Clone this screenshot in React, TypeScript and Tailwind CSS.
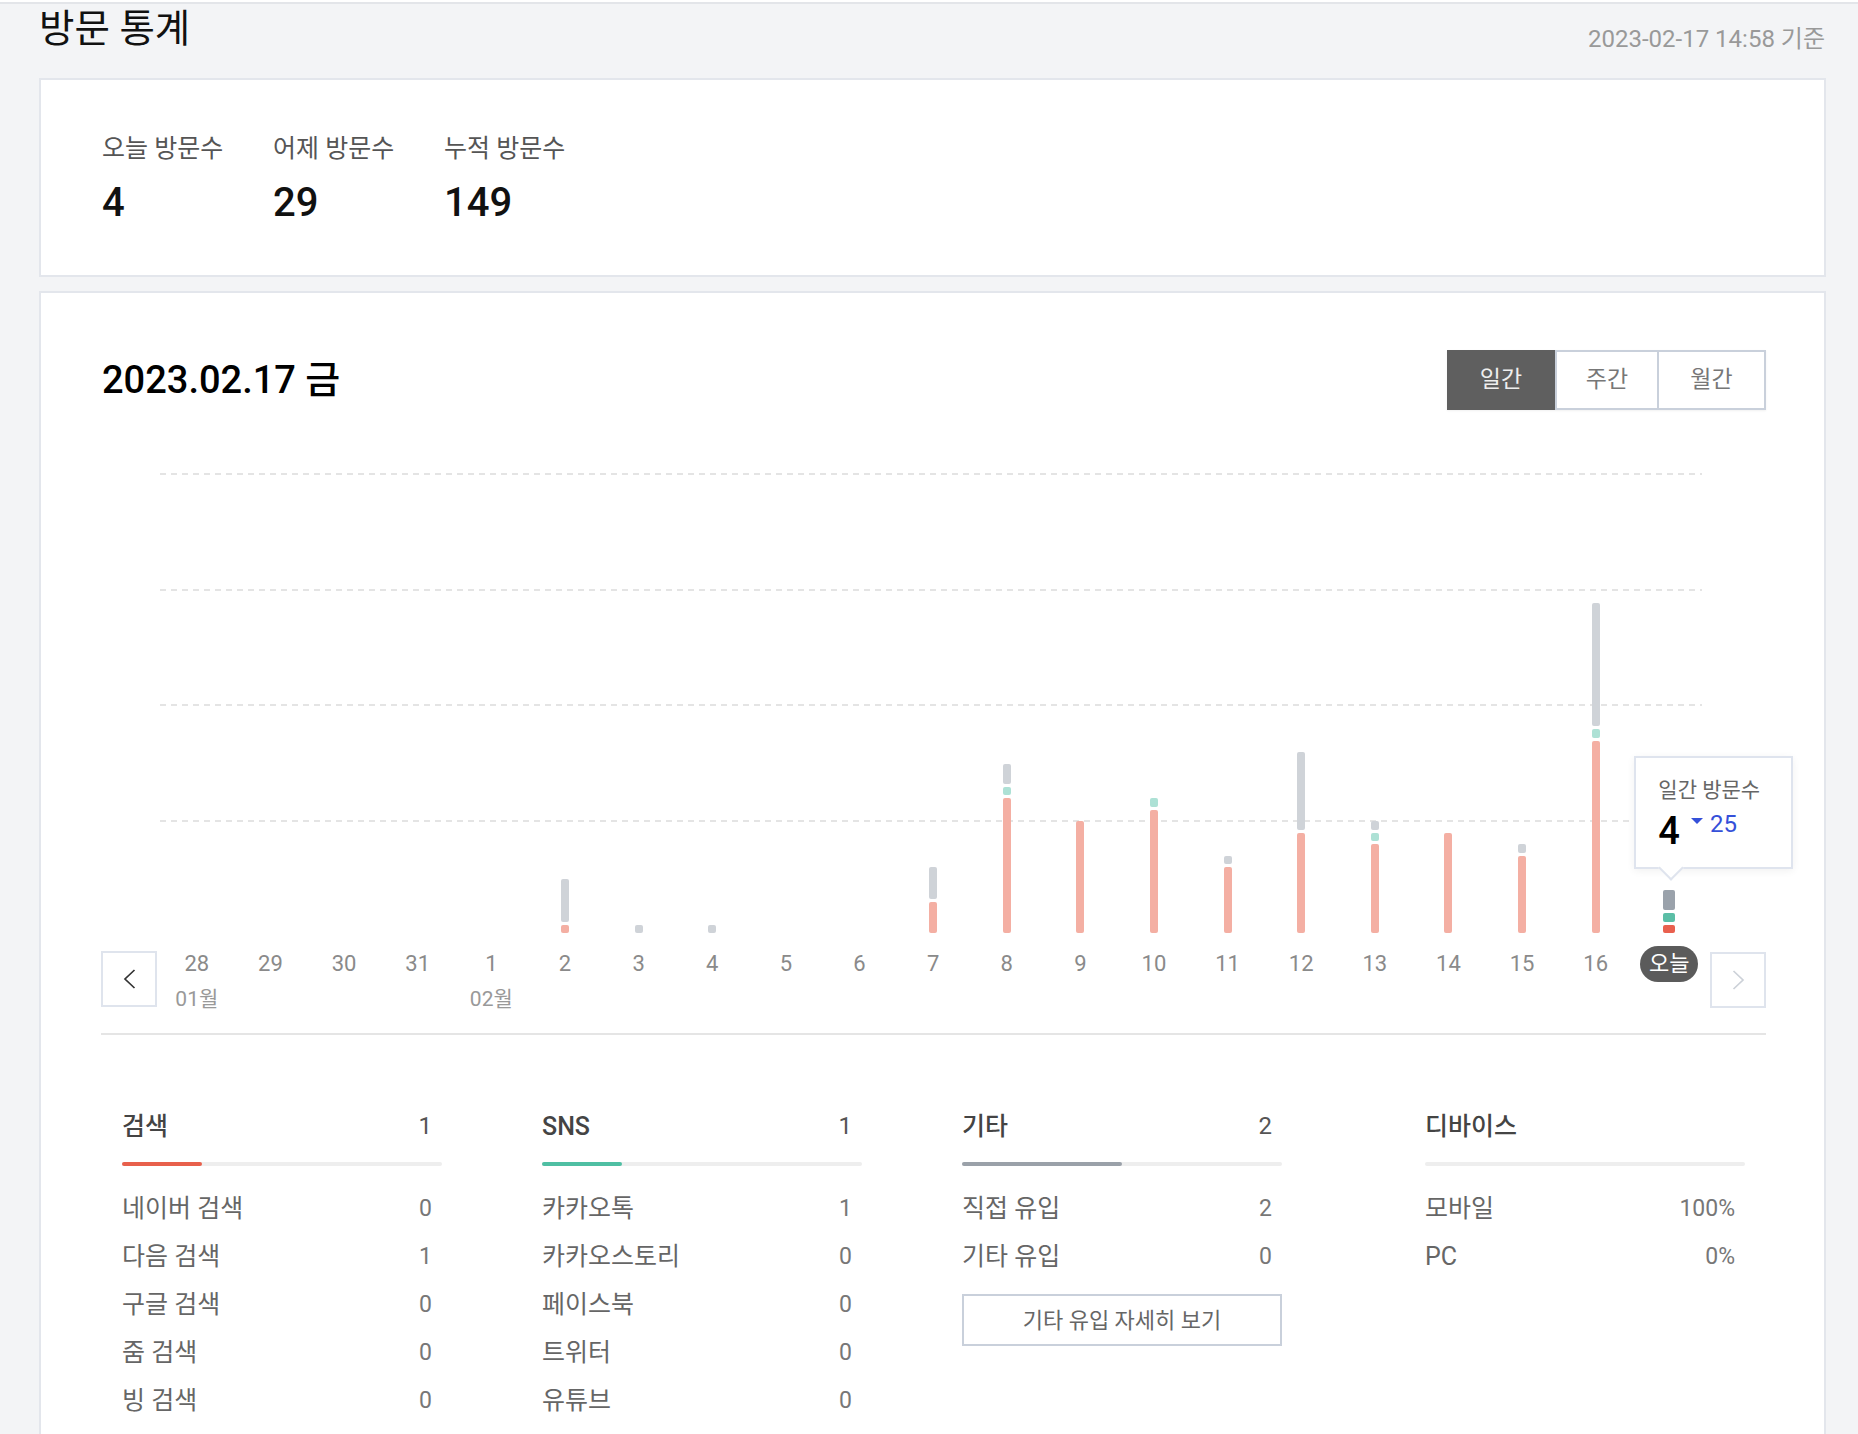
import React from 'react';

const UNIT = 11.5;

type Day = {
    label: string;
    month?: string;
    red: number;
    teal: number;
    gray: number;
    today?: boolean;
};

const DAYS: Day[] = [
    { label: '28', month: '01월', red: 0, teal: 0, gray: 0 },
    { label: '29', red: 0, teal: 0, gray: 0 },
    { label: '30', red: 0, teal: 0, gray: 0 },
    { label: '31', red: 0, teal: 0, gray: 0 },
    { label: '1', month: '02월', red: 0, teal: 0, gray: 0 },
    { label: '2', red: 1, teal: 0, gray: 4 },
    { label: '3', red: 0, teal: 0, gray: 1 },
    { label: '4', red: 0, teal: 0, gray: 1 },
    { label: '5', red: 0, teal: 0, gray: 0 },
    { label: '6', red: 0, teal: 0, gray: 0 },
    { label: '7', red: 3, teal: 0, gray: 3 },
    { label: '8', red: 12, teal: 1, gray: 2 },
    { label: '9', red: 10, teal: 0, gray: 0 },
    { label: '10', red: 11, teal: 1, gray: 0 },
    { label: '11', red: 6, teal: 0, gray: 1 },
    { label: '12', red: 9, teal: 0, gray: 7 },
    { label: '13', red: 8, teal: 1, gray: 1 },
    { label: '14', red: 9, teal: 0, gray: 0 },
    { label: '15', red: 7, teal: 0, gray: 1 },
    { label: '16', red: 17, teal: 1, gray: 11 },
    { label: '오늘', red: 1, teal: 1, gray: 2, today: true },
];

const GRID_TOPS = ['top-[33px]', 'top-[149px]', 'top-[264px]', 'top-[380px]'];

function Bar({ day }: { day: Day }) {
    const segs = [
        { v: day.gray, cls: day.today ? 'bg-[#9aa2ab]' : 'bg-[#cfd3d8]' },
        { v: day.teal, cls: day.today ? 'bg-[#5bbea6]' : 'bg-[#ade1d5]' },
        { v: day.red, cls: day.today ? 'bg-[#e9604e]' : 'bg-[#f4afa3]' },
    ].filter(s => s.v > 0);

    return (
        <div className="flex flex-col items-center gap-[3px]">
            {segs.map((s, i) => (
                <div
                    key={i}
                    className={`${day.today ? 'w-[12px]' : 'w-[8px]'} rounded-[2px] ${s.cls}`}
                    style={{ height: s.v * UNIT - 3 }}
                />
            ))}
        </div>
    );
}

function Tooltip() {
    return (
        <div className="absolute top-[316px] left-[calc(50%-35px)] z-10 w-[159px] h-[113px] bg-white border-2 border-[#dfe4ee] shadow-[0_2px_8px_rgba(0,0,0,0.06)] pl-[22px] pt-[22px]">
            <div className="text-[21px] leading-none text-[#666]">일간 방문수</div>
            <div className="flex items-start mt-[11px]">
                <span className="text-[38px] leading-none font-medium text-black">4</span>
                <span className="mt-[6px] ml-[11px] w-0 h-0 border-x-[6px] border-x-transparent border-t-[6px] border-t-[#3550d9]" />
                <span className="ml-[7px] text-[24px] leading-none text-[#3550d9]">25</span>
            </div>
            <div className="absolute left-[26px] -bottom-[10px] w-[18px] h-[18px] rotate-45 bg-white border-r-2 border-b-2 border-[#dfe4ee]" />
        </div>
    );
}

function Chevron({ dir, color }: { dir: 'left' | 'right'; color: string }) {
    return (
        <svg width="13" height="20" viewBox="0 0 13 20" fill="none">
            <polyline
                points={dir === 'left' ? '11.5,1 2,10 11.5,19' : '1.5,1 11,10 1.5,19'}
                stroke={color}
                strokeWidth="1.7"
            />
        </svg>
    );
}

type Row = { name: string; value: string };

function StatColumn({
    title,
    total,
    fill,
    rows,
    className = '',
    children,
}: {
    title: string;
    total?: string;
    fill?: string;
    rows: Row[];
    className?: string;
    children?: React.ReactNode;
}) {
    return (
        <div className={`w-[320px] ${className}`}>
            <div className="flex justify-between items-center pr-[10px] h-[24px] font-medium text-[#444]">
                <span className="text-[25px] leading-none">{title}</span>
                {total && <span className="text-[24px] leading-none font-normal text-[#555]">{total}</span>}
            </div>
            <div className="mt-[24px] h-1 w-full rounded-full bg-[#eeeeee]">
                {fill && <div className={`h-1 rounded-full ${fill}`} />}
            </div>
            <div className="mt-[19px]">
                {rows.map(r => (
                    <div key={r.name} className="flex justify-between pr-[10px] h-[48px] items-center text-[#666]">
                        <span className="text-[25px]">{r.name}</span>
                        <span className="text-[23px] text-[#777]">{r.value}</span>
                    </div>
                ))}
            </div>
            {children}
        </div>
    );
}

export default function App() {
    return (
        <div className="min-h-screen bg-[#f3f4f6] font-['Roboto','Noto_Sans_CJK_KR',sans-serif] pb-[40px]">
            <div className="h-[2px] mt-[2px] bg-[#e3e5e9]" />

            {/* Header */}
            <div className="flex justify-between items-start h-[74px] pl-[39px] pr-[33px]">
                <h1 className="mt-[6px] text-[38.5px] leading-none text-[#111]">방문 통계</h1>
                <span className="mt-[23px] text-[24px] leading-none text-[#999]">2023-02-17 14:58 기준</span>
            </div>

            {/* Summary card */}
            <div className="ml-[39px] mr-[32px] h-[199px] bg-white border-2 border-[#e3e6ec] pl-[61px] pt-[56px] flex">
                {[
                    { label: '오늘 방문수', value: '4' },
                    { label: '어제 방문수', value: '29' },
                    { label: '누적 방문수', value: '149' },
                ].map(s => (
                    <div key={s.label} className="w-[171px]">
                        <div className="text-[25px] leading-none text-[#555]">{s.label}</div>
                        <div className="mt-[22px] text-[40px] leading-none font-medium text-[#111]">{s.value}</div>
                    </div>
                ))}
            </div>

            {/* Chart card */}
            <div className="mt-[14px] ml-[39px] mr-[32px] bg-white border-2 border-[#e3e6ec] pl-[60px] pr-[58px] pt-[57px] pb-[80px]">
                <div className="flex items-center justify-between h-[60px]">
                    <h2 className="ml-[1px] text-[38px] leading-none font-medium text-black">2023.02.17 금</h2>
                    <div className="flex h-[60px] shadow-[0_1px_2px_rgba(0,0,0,0.06)]">
                        <button className="w-[108px] h-[60px] bg-[#5f5f5f] text-[23px] text-[#eeeeee]">일간</button>
                        <button className="w-[104px] h-[60px] border-2 border-[#c9d0db] text-[23px] text-[#777]">주간</button>
                        <button className="w-[107px] h-[60px] border-y-2 border-r-2 border-[#c9d0db] text-[23px] text-[#777]">월간</button>
                    </div>
                </div>

                {/* Chart */}
                <div className="relative mt-[30px]">
                    {GRID_TOPS.map(t => (
                        <div
                            key={t}
                            className={`absolute ${t} left-[59px] right-[64px] h-[2px] bg-[repeating-linear-gradient(to_right,#e4e4e4_0_6px,transparent_6px_11px)]`}
                        />
                    ))}
                    <div className="relative flex">
                        <div className="w-[59px] pt-[511px]">
                            <button className="w-[56px] h-[56px] border-2 border-[#dfe4ed] flex items-center justify-center">
                                <Chevron dir="left" color="#333" />
                            </button>
                        </div>
                        {DAYS.map(day => (
                            <div key={day.label} className="relative flex-1 flex flex-col items-center">
                                <div className="h-[493px] flex flex-col justify-end">
                                    <Bar day={day} />
                                </div>
                                {day.today && <Tooltip />}
                                <div className="mt-[13px] h-9 flex items-center">
                                    {day.today ? (
                                        <span className="w-[58px] h-9 rounded-full bg-[#5b5b5b] text-white text-[22px] leading-none flex items-center justify-center">
                                            {day.label}
                                        </span>
                                    ) : (
                                        <span className="text-[22px] leading-none text-[#8a8a8a]">{day.label}</span>
                                    )}
                                </div>
                                <div className="mt-[2px] h-[30px] text-[21px] leading-[30px] text-[#999]">{day.month}</div>
                            </div>
                        ))}
                        <div className="w-[60px] pt-[512px] flex justify-end">
                            <button className="w-[56px] h-[56px] border-2 border-[#dfe4ed] flex items-center justify-center">
                                <Chevron dir="right" color="#ccd1d8" />
                            </button>
                        </div>
                    </div>
                </div>

                <div className="mt-[19px] h-[2px] bg-[#e5e5e5]" />

                {/* Inflow stats */}
                <div className="mt-[79px] pl-[21px] flex gap-[100px]">
                    <StatColumn
                        title="검색"
                        total="1"
                        fill="w-1/4 bg-[#e8604c]"
                        rows={[
                            { name: '네이버 검색', value: '0' },
                            { name: '다음 검색', value: '1' },
                            { name: '구글 검색', value: '0' },
                            { name: '줌 검색', value: '0' },
                            { name: '빙 검색', value: '0' },
                        ]}
                    />
                    <StatColumn
                        title="SNS"
                        total="1"
                        fill="w-1/4 bg-[#4fbfa3]"
                        rows={[
                            { name: '카카오톡', value: '1' },
                            { name: '카카오스토리', value: '0' },
                            { name: '페이스북', value: '0' },
                            { name: '트위터', value: '0' },
                            { name: '유튜브', value: '0' },
                        ]}
                    />
                    <StatColumn
                        title="기타"
                        total="2"
                        fill="w-1/2 bg-[#9aa1a9]"
                        rows={[
                            { name: '직접 유입', value: '2' },
                            { name: '기타 유입', value: '0' },
                        ]}
                    >
                        <button className="mt-[13px] w-full h-[52px] border-2 border-[#c9d0db] text-[22px] text-[#666]">
                            기타 유입 자세히 보기
                        </button>
                    </StatColumn>
                    <StatColumn
                        title="디바이스"
                        className="ml-[43px]"
                        rows={[
                            { name: '모바일', value: '100%' },
                            { name: 'PC', value: '0%' },
                        ]}
                    />
                </div>
            </div>
        </div>
    );
}
